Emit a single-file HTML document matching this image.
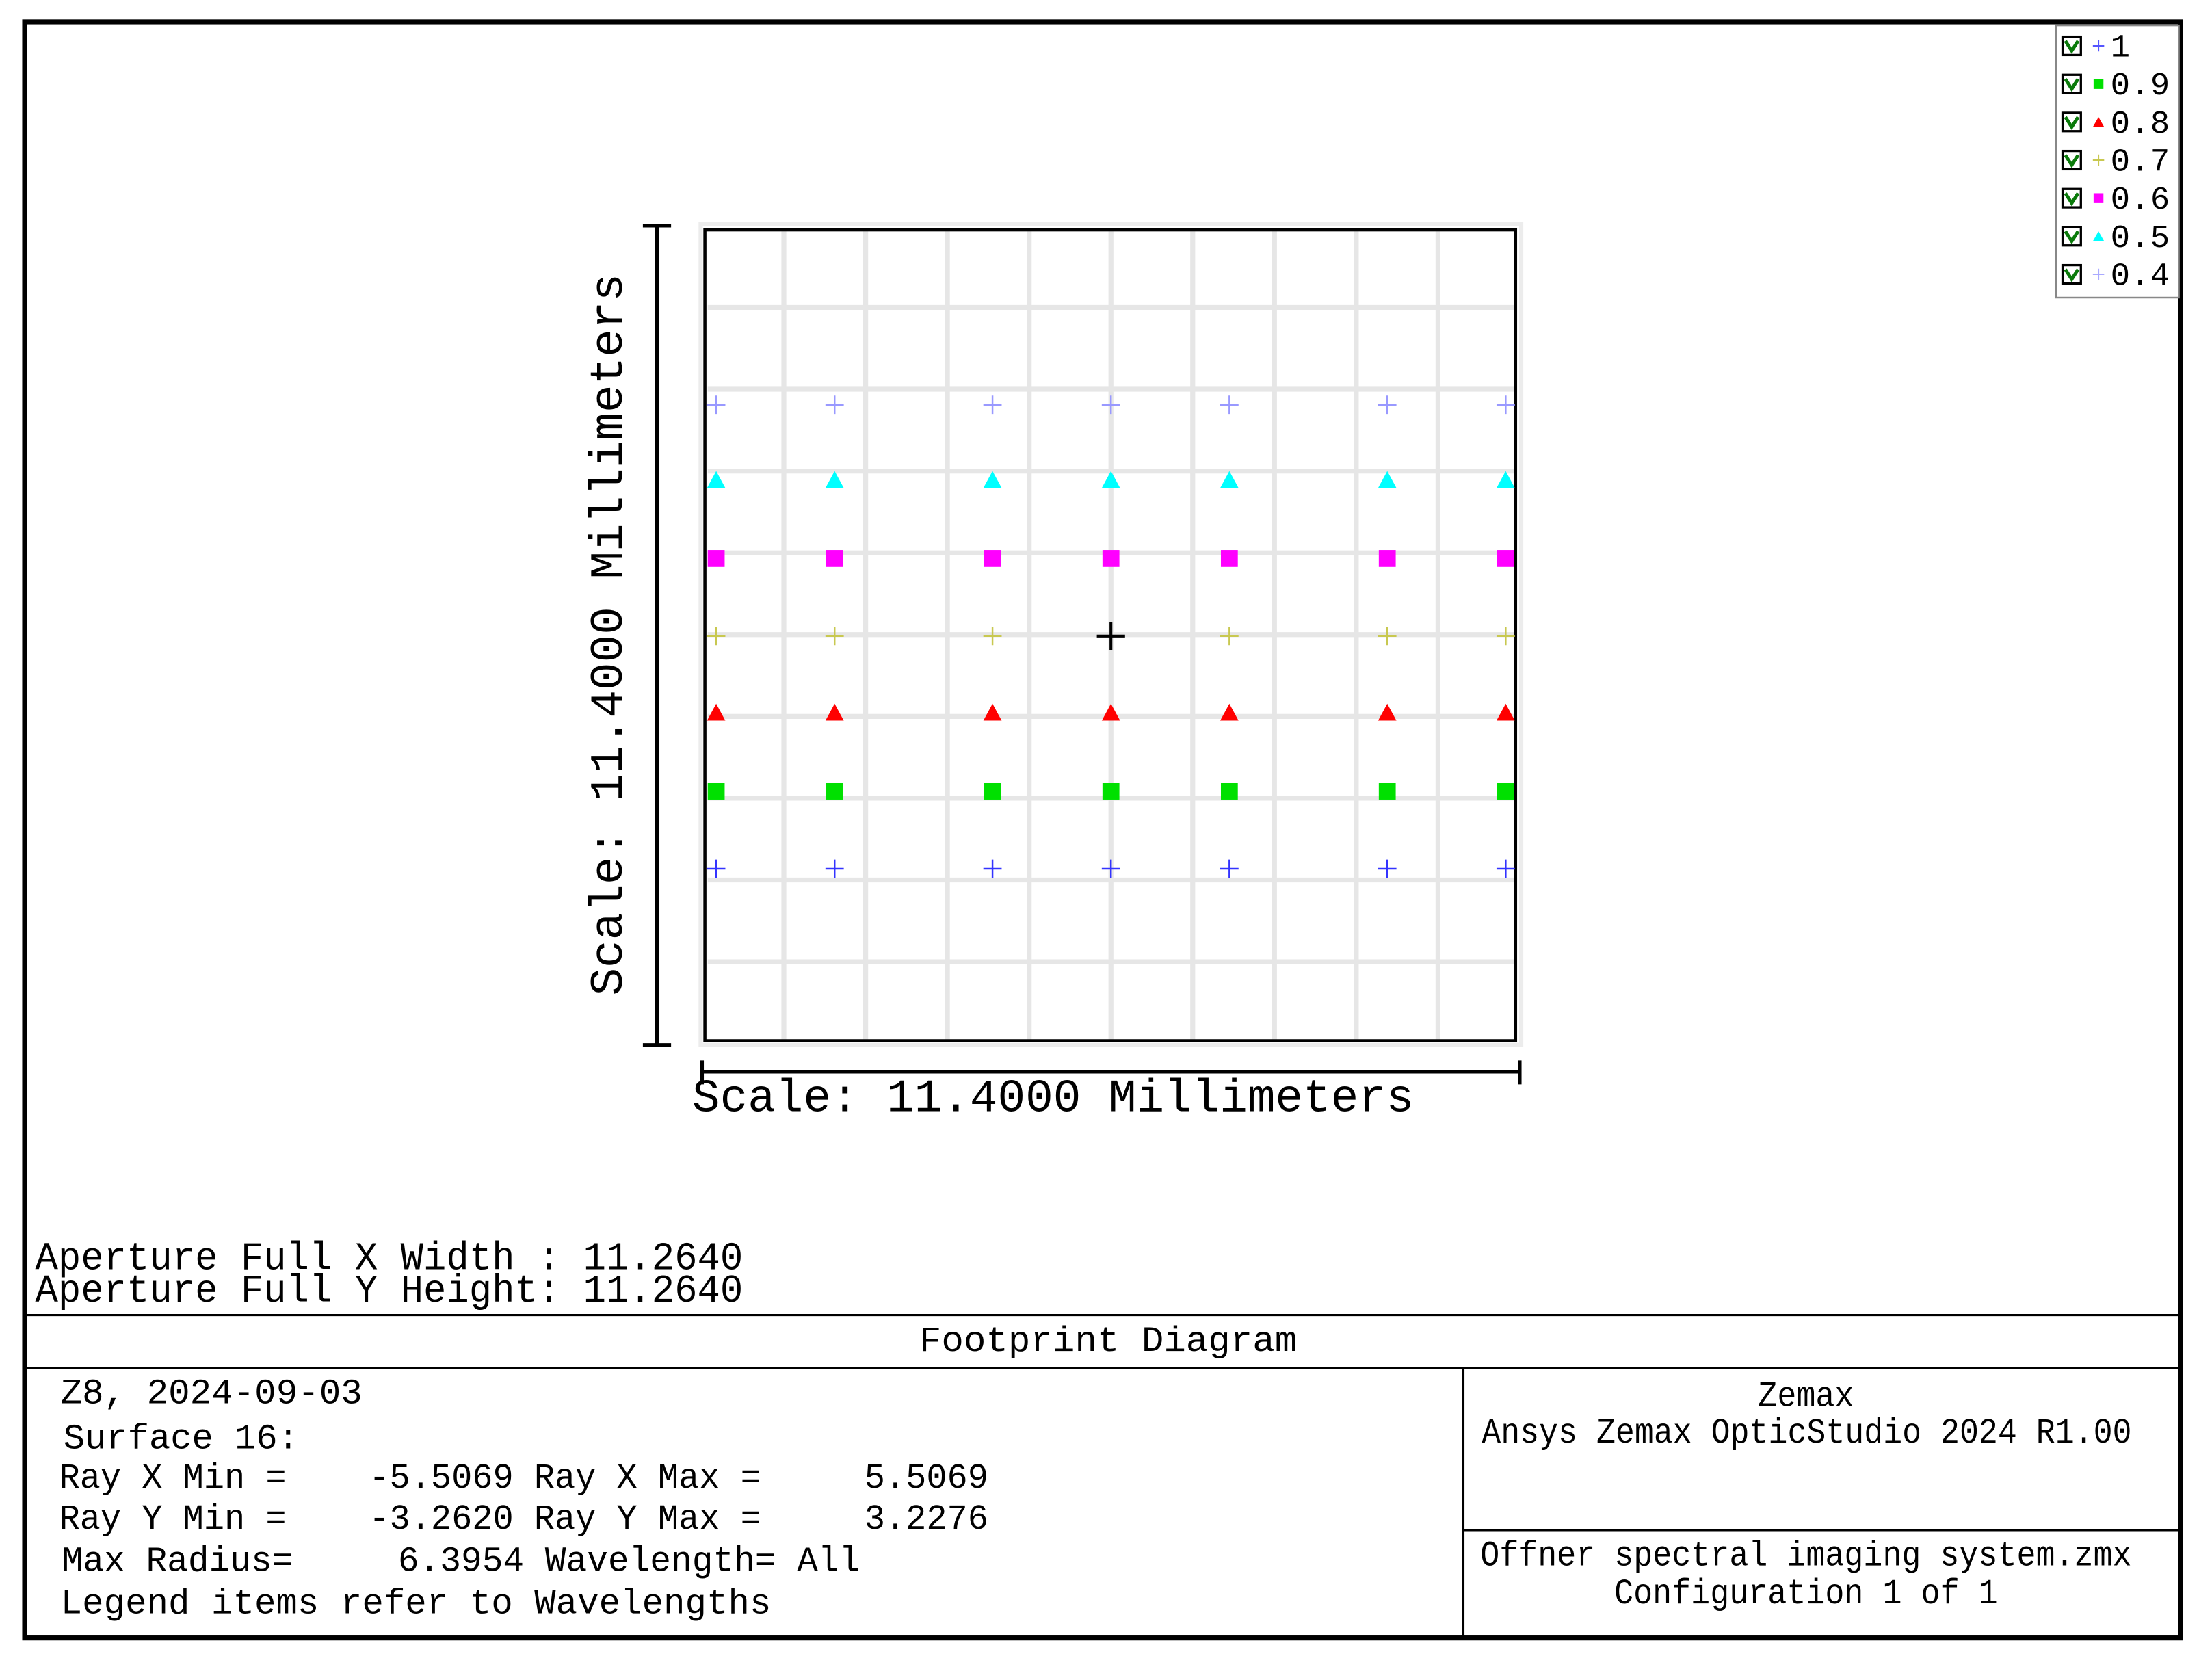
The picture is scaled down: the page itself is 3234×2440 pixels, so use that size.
<!DOCTYPE html>
<html><head><meta charset="utf-8"><style>
html,body{margin:0;padding:0;background:#fff;}
svg{display:block;}
text{font-family:"Liberation Mono","DejaVu Sans Mono",monospace;fill:#000;}
</style></head><body>
<svg width="3234" height="2440" viewBox="0 0 1569 1183.5" preserveAspectRatio="none" xmlns="http://www.w3.org/2000/svg">
<rect x="0" y="0" width="1569" height="1184" fill="#fff"/>
<rect x="17.5" y="15.5" width="1529" height="1146" fill="none" stroke="#000" stroke-width="3.5"/>
<rect x="1458.5" y="18" width="87" height="193" fill="#fff" stroke="#888" stroke-width="1.2"/>
<g stroke="#000" stroke-width="1.6" fill="#fff">
 <rect x="1463" y="26" width="13" height="13"/><rect x="1463" y="53" width="13" height="13"/><rect x="1463" y="80" width="13" height="13"/><rect x="1463" y="107" width="13" height="13"/><rect x="1463" y="134" width="13" height="13"/><rect x="1463" y="161" width="13" height="13"/><rect x="1463" y="188" width="13" height="13"/>
</g>
<g stroke="#0a7a0a" stroke-width="2.4" fill="none">
 <path d="M1465 29 l4.5 7 l4.5 -7"/><path d="M1465 56 l4.5 7 l4.5 -7"/><path d="M1465 83 l4.5 7 l4.5 -7"/><path d="M1465 110 l4.5 7 l4.5 -7"/><path d="M1465 137 l4.5 7 l4.5 -7"/><path d="M1465 164 l4.5 7 l4.5 -7"/><path d="M1465 191 l4.5 7 l4.5 -7"/>
</g>
<path d="M1484.5 32.5h8M1488.5 28.5v8" stroke="#5555ff" stroke-width="1"/>
<rect x="1485" y="56" width="7" height="7" fill="#00e000"/>
<path d="M1484.5 90l4 -7 4 7z" fill="#f00"/>
<path d="M1484.5 113.5h8M1488.5 109.5v8" stroke="#c8c850" stroke-width="1"/>
<rect x="1485" y="137" width="7" height="7" fill="#f0f"/>
<path d="M1484.5 171l4 -7 4 7z" fill="#0ff"/>
<path d="M1484.5 194.5h8M1488.5 190.5v8" stroke="#aaaaff" stroke-width="1"/>
<g font-size="23">
 <text x="1497" y="40">1</text><text x="1497" y="67" textLength="42">0.9</text><text x="1497" y="94" textLength="42">0.8</text><text x="1497" y="121" textLength="42">0.7</text><text x="1497" y="148" textLength="42">0.6</text><text x="1497" y="175" textLength="42">0.5</text><text x="1497" y="202" textLength="42">0.4</text>
</g>
<rect x="497" y="159" width="582" height="582" fill="none" stroke="#ececec" stroke-width="3"/>
<g stroke="#e6e6e6" stroke-width="3.5">
 <path d="M556 164V737M614 164V737M672 164V737M730 164V737M788 164V737M846 164V737M904 164V737M962 164V737M1020 164V737"/>
 <path d="M502 218H1074M502 276H1074M502 334H1074M502 392H1074M502 450H1074M502 508H1074M502 566H1074M502 624H1074M502 682H1074"/>
</g>
<rect x="500" y="163" width="575" height="575" fill="none" stroke="#000" stroke-width="2.2"/>
<g stroke="#9999ff" stroke-width="1.2">
 <path d="M501.5 287h13M508 280.5v13M585.5 287h13M592 280.5v13M697.5 287h13M704 280.5v13M781.5 287h13M788 280.5v13M865.5 287h13M872 280.5v13M977.5 287h13M984 280.5v13M1061.5 287h13M1068 280.5v13"/>
</g>
<g fill="#00ffff">
 <path d="M501.5 346l6.5-12 6.5 12zM585.5 346l6.5-12 6.5 12zM697.5 346l6.5-12 6.5 12zM781.5 346l6.5-12 6.5 12zM865.5 346l6.5-12 6.5 12zM977.5 346l6.5-12 6.5 12zM1061.5 346l6.5-12 6.5 12z"/>
</g>
<g fill="#ff00ff">
 <rect x="502" y="390" width="12" height="12"/><rect x="586" y="390" width="12" height="12"/><rect x="698" y="390" width="12" height="12"/><rect x="782" y="390" width="12" height="12"/><rect x="866" y="390" width="12" height="12"/><rect x="978" y="390" width="12" height="12"/><rect x="1062" y="390" width="12" height="12"/>
</g>
<g stroke="#c8c850" stroke-width="1.2">
 <path d="M501.5 451h13M508 444.5v13M585.5 451h13M592 444.5v13M697.5 451h13M704 444.5v13M865.5 451h13M872 444.5v13M977.5 451h13M984 444.5v13M1061.5 451h13M1068 444.5v13"/>
</g>
<path d="M778 451h20M788 441v20" stroke="#000" stroke-width="2"/>
<g fill="#ff0000">
 <path d="M501.5 511l6.5-12 6.5 12zM585.5 511l6.5-12 6.5 12zM697.5 511l6.5-12 6.5 12zM781.5 511l6.5-12 6.5 12zM865.5 511l6.5-12 6.5 12zM977.5 511l6.5-12 6.5 12zM1061.5 511l6.5-12 6.5 12z"/>
</g>
<g fill="#00e000">
 <rect x="502" y="555" width="12" height="12"/><rect x="586" y="555" width="12" height="12"/><rect x="698" y="555" width="12" height="12"/><rect x="782" y="555" width="12" height="12"/><rect x="866" y="555" width="12" height="12"/><rect x="978" y="555" width="12" height="12"/><rect x="1062" y="555" width="12" height="12"/>
</g>
<g stroke="#3333ff" stroke-width="1.2">
 <path d="M501.5 616h13M508 609.5v13M585.5 616h13M592 609.5v13M697.5 616h13M704 609.5v13M781.5 616h13M788 609.5v13M865.5 616h13M872 609.5v13M977.5 616h13M984 609.5v13M1061.5 616h13M1068 609.5v13"/>
</g>
<path d="M466 160V741M456 160H476M456 741H476" stroke="#000" stroke-width="2.5" fill="none"/>
<path d="M498 760H1078M498 752V769M1078 752V769" stroke="#000" stroke-width="2.5" fill="none"/>
<text x="0" y="0" font-size="33" textLength="512" lengthAdjust="spacingAndGlyphs" transform="translate(441 706) rotate(-90)">Scale: 11.4000 Millimeters</text>
<text x="491" y="788" font-size="33" textLength="512" lengthAdjust="spacingAndGlyphs">Scale: 11.4000 Millimeters</text>
<text x="25" y="900" font-size="28" textLength="502" lengthAdjust="spacingAndGlyphs">Aperture Full X Width : 11.2640</text>
<text x="25" y="923" font-size="28" textLength="502" lengthAdjust="spacingAndGlyphs">Aperture Full Y Height: 11.2640</text>
<path d="M18 932.5H1546M18 970H1546M1038 970V1161M1038 1085H1546" stroke="#000" stroke-width="1.5" fill="none"/>
<g font-size="25">
<text x="652" y="958" textLength="268" lengthAdjust="spacingAndGlyphs">Footprint Diagram</text>
<text x="43" y="995" textLength="214" lengthAdjust="spacingAndGlyphs">Z8, 2024-09-03</text>
<text x="45" y="1027" textLength="167" lengthAdjust="spacingAndGlyphs">Surface 16:</text>
<text x="42" y="1055" xml:space="preserve" textLength="659" lengthAdjust="spacingAndGlyphs">Ray X Min =    -5.5069 Ray X Max =     5.5069</text>
<text x="42" y="1084" xml:space="preserve" textLength="659" lengthAdjust="spacingAndGlyphs">Ray Y Min =    -3.2620 Ray Y Max =     3.2276</text>
<text x="44" y="1114" xml:space="preserve" textLength="566" lengthAdjust="spacingAndGlyphs">Max Radius=     6.3954 Wavelength= All</text>
<text x="43" y="1144" textLength="504" lengthAdjust="spacingAndGlyphs">Legend items refer to Wavelengths</text>
<text x="1247" y="997" textLength="68" lengthAdjust="spacingAndGlyphs">Zemax</text>
<text x="1051" y="1023" textLength="461" lengthAdjust="spacingAndGlyphs">Ansys Zemax OpticStudio 2024 R1.00</text>
<text x="1050" y="1110" textLength="462" lengthAdjust="spacingAndGlyphs">Offner spectral imaging system.zmx</text>
<text x="1145" y="1137" textLength="272" lengthAdjust="spacingAndGlyphs">Configuration 1 of 1</text>
</g>
</svg>
</body></html>
